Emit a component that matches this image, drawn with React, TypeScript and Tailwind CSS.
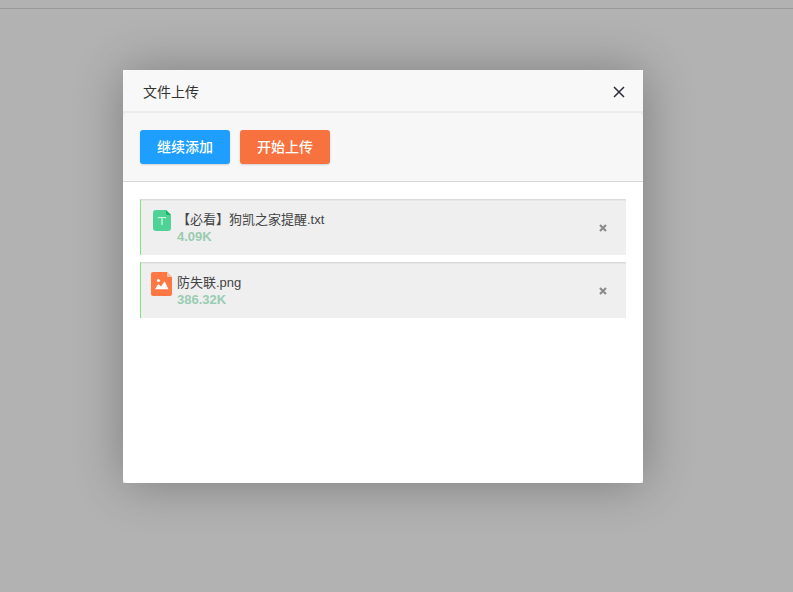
import type { ReactNode } from 'react'

interface UploadFile {
  name: string
  size: string
  icon: ReactNode
}

const TextIcon = () => (
  <svg width="24" height="24" viewBox="0 0 24 24" aria-hidden="true">
    <path d="M6 1h10l5 5v13a3 3 0 0 1-3 3H6a3 3 0 0 1-3-3V4a3 3 0 0 1 3-3z" fill="#4fd295" />
    <path d="M16 1l5 5h-3a2 2 0 0 1-2-2z" fill="#16b265" />
    <path d="M8 8.5h8" stroke="#d3f5e5" strokeWidth="1.2" />
    <path d="M8.5 9v1M15.5 9v1" stroke="#7cdfb0" strokeWidth="1" />
    <path d="M12 9v7" stroke="#a9ebcc" strokeWidth="1.8" />
  </svg>
)

const ImageIcon = () => (
  <svg width="24" height="24" viewBox="0 0 24 24" aria-hidden="true">
    <path d="M3 0h14l5 5v17a2 2 0 0 1-2 2H3a2 2 0 0 1-2-2V2a2 2 0 0 1 2-2z" fill="#ff7843" />
    <path d="M17 0l5 5h-4a1 1 0 0 1-1-1z" fill="#ffc7b0" />
    <circle cx="8.5" cy="8.5" r="1.6" fill="#fff" />
    <path d="M5 17.2l3.2-5.2 2.8 2.4 3.6-5.2 3.9 8z" fill="#fff" />
  </svg>
)

const files: UploadFile[] = [
  { name: '【必看】狗凯之家提醒.txt', size: '4.09K', icon: <TextIcon /> },
  { name: '防失联.png', size: '386.32K', icon: <ImageIcon /> },
]

function FileRow({ file }: { file: UploadFile }) {
  return (
    <li className="flex h-14 items-center border-t border-l border-t-[#dadada] border-l-[#7fe87a] bg-[#efefef] pr-[15px] pl-[9px] shadow-[inset_0_1px_0_#e6e6e6]">
      <div className="flex flex-1 items-start gap-[3px] self-start pt-[9px]">
        {file.icon}
        <div className="pt-[2px]">
          <p className="text-[13px] leading-[17px] text-[#444]">{file.name}</p>
          <p className="text-[13px] leading-[17px] font-bold text-[#99ccb2]">{file.size}</p>
        </div>
      </div>
      <button type="button" aria-label="删除" className="flex size-4 cursor-pointer items-center justify-center">
        <svg width="8" height="8" viewBox="0 0 8 8" aria-hidden="true">
          <path d="M1 1l6 6M7 1L1 7" stroke="#8c8c8c" strokeWidth="2.2" />
        </svg>
      </button>
    </li>
  )
}

export default function App() {
  return (
    <div className="min-h-screen bg-[#b2b2b2] pt-2 font-['Liberation_Sans','Noto_Sans_CJK_SC',sans-serif]">
      <div className="border-t border-[#999] px-[123px] pt-[61px]">
        <section
          role="dialog"
          aria-labelledby="upload-title"
          className="flex min-h-[413px] w-full max-w-[520px] flex-col rounded-[1px] bg-[#eee] shadow-[1px_1px_50px_rgba(0,0,0,0.3)]"
        >
          <header className="flex h-[43px] items-center justify-between bg-[#f8f8f8] pr-4 pl-5 shadow-[inset_0_-2px_0_#ececec]">
            <h1 id="upload-title" className="text-sm text-[#333]">文件上传</h1>
            <button type="button" aria-label="关闭" className="flex size-4 cursor-pointer items-center justify-center">
              <svg width="12" height="12" viewBox="0 0 12 12" aria-hidden="true">
                <path d="M1 1l10 10M11 1L1 11" stroke="#2d2c3b" strokeWidth="1.5" />
              </svg>
            </button>
          </header>

          <div className="flex-1 overflow-hidden rounded-[5px] bg-white">
            <div className="flex gap-[10px] border-b border-[#d8d8d8] bg-[#f7f7f7] p-[17px]">
              <button
                type="button"
                className="h-[34px] w-[90px] cursor-pointer rounded-[3px] bg-[#1e9fff] text-sm font-medium text-white shadow-[0_1px_2px_rgba(0,0,0,0.15)]"
              >
                继续添加
              </button>
              <button
                type="button"
                className="h-[34px] w-[90px] cursor-pointer rounded-[3px] bg-[#f7723e] text-sm font-medium text-white shadow-[0_1px_2px_rgba(0,0,0,0.15)]"
              >
                开始上传
              </button>
            </div>

            <ul className="flex flex-col gap-[7px] p-[17px]">
              {files.map((file) => (
                <FileRow key={file.name} file={file} />
              ))}
            </ul>
          </div>
        </section>
      </div>
    </div>
  )
}
